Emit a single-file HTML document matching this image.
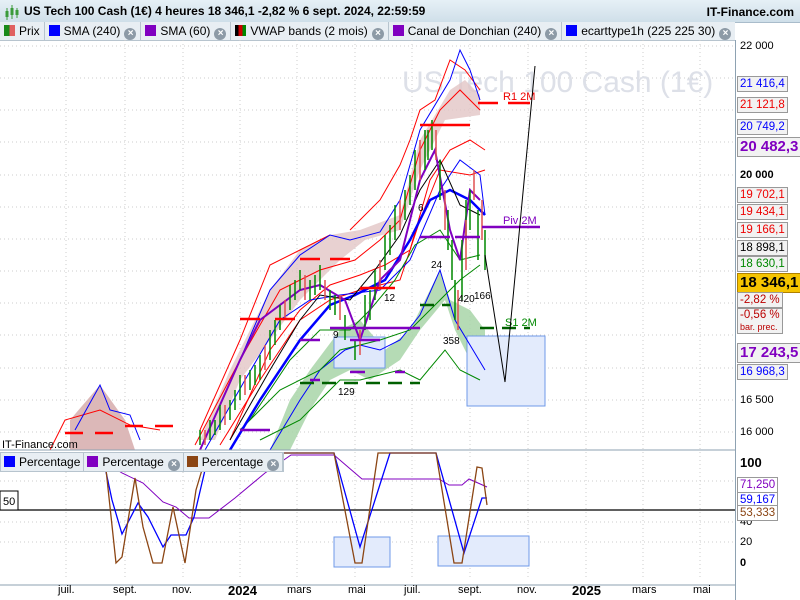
<!DOCTYPE html>
<html><head><meta charset="utf-8"><style>
body{margin:0;width:800px;height:600px;overflow:hidden;background:#fff;font-family:"Liberation Sans",sans-serif;position:relative}
.top{position:absolute;left:0;top:0;width:800px;height:22px;background:linear-gradient(#e6f0f6,#cfdfe9);border-bottom:1px solid #a9bccb}
.top .t{position:absolute;left:24px;top:4px;font-size:12px;font-weight:bold;color:#000}
.top .r{position:absolute;right:6px;top:5px;font-size:12px;font-weight:bold}
.leg{position:absolute;left:0;top:22px;height:18px;width:735px;background:#e8eef3;border-bottom:1px solid #b7c4ce;font-size:12px;white-space:nowrap;overflow:hidden}
.leg span{display:inline-block;height:18px;line-height:18px;padding:0 4px 0 4px;border-right:1px solid #b7c4ce}
.sq{display:inline-block;width:11px;height:11px;vertical-align:-1px;margin-right:4px}
.x{display:inline-block;width:12px;height:12px;border-radius:6px;background:#8d9aa6;color:#fff;font-size:10px;line-height:12px;text-align:center;vertical-align:-1px;margin-left:4px;font-weight:bold}
.ax{position:absolute;left:735px;top:40px;width:65px;height:560px;background:#fff;border-left:1px solid #8ea2b2}
.lab{position:absolute;left:737px;font-size:11.5px;background:#f2f2f2;border:1px solid #999;padding:0 2px;line-height:14px;white-space:nowrap}
.al{position:absolute;left:740px;font-size:11px;color:#000}
.bl{position:absolute;top:584px;font-size:11px;color:#000}
.leg2{position:absolute;left:0;top:452px;height:18px;background:#e8eef3;border:1px solid #b7c4ce;font-size:12px;white-space:nowrap}
.leg2 span{display:inline-block;height:18px;line-height:18px;padding:0 3px;border-right:1px solid #b7c4ce}
</style></head><body>
<div class="top"><svg width="20" height="20" style="position:absolute;left:3px;top:2px"><path d="M4 6v12M9 3v14M14 6v10" stroke="#3a9a3a" stroke-width="1"/><rect x="2.5" y="9" width="3" height="6" fill="#3a9a3a"/><rect x="7.5" y="6" width="3" height="7" fill="#3a9a3a"/><rect x="12.5" y="8" width="3" height="5" fill="#3a9a3a"/></svg><div class="t">US Tech 100 Cash (1€) 4 heures 18 346,1 -2,82 % 6 sept. 2024, 22:59:59</div><div class="r">IT-Finance.com</div></div>
<div class="leg"><span><i class="sq" style="background:linear-gradient(90deg,#1a8a1a 50%,#e06060 50%)"></i>Prix</span><span><i class="sq" style="background:#00f"></i>SMA (240)<i class="x">×</i></span><span><i class="sq" style="background:#8000c0"></i>SMA (60)<i class="x">×</i></span><span><i class="sq" style="background:linear-gradient(90deg,#000 33%,#c00 33%,#c00 66%,#080 66%)"></i>VWAP bands (2 mois)<i class="x">×</i></span><span><i class="sq" style="background:#8000c0"></i>Canal de Donchian (240)<i class="x">×</i></span><span><i class="sq" style="background:#00f"></i>ecarttype1h (225 225 30)<i class="x">×</i></span><span><i class="sq" style="background:linear-gradient(90deg,#c00 33%,#80c 33%,#80c 66%,#080 66%)"></i>Points pivots</span></div>
<svg width="735" height="560" style="position:absolute;left:0;top:40px" viewBox="0 40 735 560">
<g stroke="#ccc" stroke-dasharray="1,3">
<path d="M66 40V578M125 40V578M183 40V578M240 40V578M297 40V578M355 40V578M412 40V578M470 40V578M528 40V578M586 40V578M643 40V578M700 40V578"/>
<path d="M0 46H735M0 78H735M0 110H735M0 142H735M0 175H735M0 207H735M0 239H735M0 271H735M0 303H735M0 335H735M0 368H735M0 400H735M0 432H735"/>
<path d="M0 481H735M0 522H735M0 542H735"/>
</g>
<text x="402" y="92" font-size="30" fill="#dde0e8" font-family="Liberation Sans">US Tech 100 Cash (1€)</text>
<path d="M70 420L100 385L125 420L135 450L70 450Z" fill="#dcb8b8"/>
<path d="M200 440L230 370L270 290L300 250L330 235L360 230L400 215L420 140L450 90L465 80L480 95L480 115L445 120L420 170L400 230L365 240L340 260L300 300L270 340L240 380L215 440Z" fill="#e2c6c6" opacity=".8"/>
<path d="M270 450L290 400L310 370L340 330L360 320L385 350L410 330L440 270L450 300L470 310L485 330L485 380L470 360L455 330L445 300L420 330L400 360L370 380L350 370L330 380L310 410L290 450Z" fill="#a8d5a8" opacity=".85"/>
<rect x="334" y="337" width="51" height="31" fill="#dfe8fb" stroke="#6f9ae8"/>
<rect x="467" y="336" width="78" height="70" fill="#e3ebfc" stroke="#6f9ae8"/>
<path d="M50 450L65 420L100 410L130 425L160 430M200 430L240 340L270 265L300 250L330 235M350 230L380 200L400 165L410 140L420 110L435 100L450 60L465 70L480 90" fill="none" stroke="#f00"/>
<path d="M195 445L240 360L280 290L320 270L355 260L380 240L400 220L420 150L440 110L460 90L480 110" fill="none" stroke="#f00"/>
<path d="M220 445L260 380L300 320L330 300L360 290L400 280L420 220L440 170L470 175L485 170" fill="none" stroke="#f00"/>
<path d="M230 440L270 350L300 310L330 285L360 275L385 265L410 250L430 180L450 150L470 140L485 150" fill="none" stroke="#f00"/>
<path d="M75 430L100 385L110 410L130 415L140 440M200 450L240 360L270 290L300 255L330 235L350 240L380 232L400 200L420 130L450 80L460 50L470 70L480 100" fill="none" stroke="#00f"/>
<path d="M205 450L245 380L280 320L310 300L340 295L380 290L410 260L440 190L460 160L480 175L485 215" fill="none" stroke="#00f"/>
<path d="M270 450L300 400L320 370L345 350L360 345L380 350L400 340L420 315L440 270L455 320L470 345L485 370" fill="none" stroke="#00f"/>
<path d="M240 430L280 390L320 370L340 350L380 340L410 330L440 300L460 280L480 265" fill="none" stroke="#080"/>
<path d="M260 440L300 420L340 380L360 380L380 375L400 370L420 380L445 350L460 370L480 380" fill="none" stroke="#080"/>
<path d="M250 420L290 360L320 330L350 330L370 310L395 280L415 245L440 230L460 260L480 255" fill="none" stroke="#080"/>
<path d="M230 450L260 400L300 340L330 305L355 295L385 280L410 240L430 200L450 190L470 200L485 215" fill="none" stroke="#00f" stroke-width="2.5"/>
<path d="M230 440L270 370L300 320L320 295L350 300L375 270L400 235L420 190L440 160L460 205L480 215" fill="none" stroke="#000"/>
<path d="M200 450L240 360L260 320L300 290L320 285L345 300L360 340L380 280L400 260L420 180L435 150L450 230L460 260L470 190L480 200" fill="none" stroke="#8000c0" stroke-width="2"/>
<g stroke="#080" stroke-width="1.5">
<path d="M200 445v-15M210 440v-20M220 430v-25M230 420v-20M240 400v-25M250 390v-20M260 380v-25M270 360v-30M280 330v-25M290 310v-25M300 290v-20M310 300v-20M320 290v-25M330 310v-20M345 340v-25M355 360v-20M365 330v-35M375 300v-30M385 270v-35M395 240v-35M405 220v-30M415 190v-40M425 170v-40M432 150v-30M440 200v-40M448 250v-40M455 320v-40M462 300v-60M470 230v-40M478 260v-50M485 270v-40"/>
<path d="M215 435v-15M235 410v-20M255 385v-20M275 345v-25M295 300v-20M315 295v-20M335 315v-20M370 320v-30M390 255v-30M410 205v-30M428 160v-30M452 280v-40M466 240v-40"/>
</g>
<g stroke="#e05050" stroke-width="1.5">
<path d="M205 445v-15M225 425v-20M245 395v-20M265 370v-25M285 320v-20M305 300v-25M325 300v-20M340 320v-25M360 355v-25M380 290v-30M400 230v-30M420 180v-40M436 160v-30M445 230v-40M458 330v-40M466 270v-50M474 200v-30M482 240v-40"/>
</g>
<g stroke="#f00" stroke-width="2.5"><path d="M65 433h18M95 433h18M125 426h18M155 426h18M240 319h20M275 319h20M300 259h20M330 259h20M360 288h20M375 288h20M420 125h35M440 125h30M478 103h20M508 103h22"/></g>
<g stroke="#8000c0" stroke-width="2.5"><path d="M240 430h30M300 340h20M350 340h30M330 328h30M360 328h60M420 237h30M455 237h25M482 227h58M310 380h10M350 372h15M395 372h10"/></g>
<g stroke="#006000" stroke-width="2.5" stroke-dasharray="14,8"><path d="M300 383h120M420 305h30M480 328h50"/></g>
<text x="503" y="100" font-size="11" fill="#e00">R1 2M</text>
<text x="503" y="224" font-size="11" fill="#8000c0">Piv 2M</text>
<text x="505" y="326" font-size="11" fill="#080">S1 2M</text>
<g font-size="10" fill="#000"><text x="333" y="338">9</text><text x="338" y="395">129</text><text x="384" y="301">12</text><text x="431" y="268">24</text><text x="458" y="302">420</text><text x="474" y="299">166</text><text x="443" y="344">358</text><text x="418" y="211">6</text></g>
<path d="M485 255L505 382L535 66" fill="none" stroke="#000"/>
<path d="M0 450H735" stroke="#8ea2b2"/>
<path d="M0 510H735" stroke="#000" stroke-width="1.3"/>
<rect x="0" y="491" width="18" height="19" fill="#fff" stroke="#000"/>
<text x="3" y="505" font-size="11">50</text>
<rect x="334" y="537" width="56" height="30" fill="#e3ebfc" stroke="#6f9ae8"/>
<rect x="438" y="536" width="91" height="30" fill="#e3ebfc" stroke="#6f9ae8"/>
<path d="M102 460L122 473L143 483L163 502L176 507L189 518L209 518L235 498L265 473L291 455L334 455L362 479L439 479L449 485L462 485L469 479L487 487" fill="none" stroke="#8000c0"/>
<path d="M102 453L112 500L122 534L138 503L148 517L163 547L171 535L186 535L194 517L209 453L334 453L360 547L390 453L436 453L464 553L482 498L487 498" fill="none" stroke="#00f" stroke-width="1.3"/>
<path d="M105 460L116 563L122 557L135 478L143 527L153 563L162 563L173 507L185 563L196 490L207 453L334 453L355 563L362 563L378 453L436 453L454 563L462 563L477 467L482 468L487 505" fill="none" stroke="#8b4513" stroke-width="1.3"/>
<path d="M0 585H735" stroke="#8ea2b2"/>
</svg>
<div class="leg2"><span><i class="sq" style="background:#00f"></i>Percentage</span><span><i class="sq" style="background:#8000c0"></i>Percentage<i class="x">×</i></span><span><i class="sq" style="background:#8b4513"></i>Percentage<i class="x">×</i></span></div>
<div style="position:absolute;left:2px;top:439px;font-size:11px">IT-Finance.com</div>
<div class="ax"></div>
<div class="al" style="top:40px">22 000</div>
<div class="al" style="top:169px;font-weight:bold">20 000</div>
<div class="al" style="top:394px">16 500</div>
<div class="al" style="top:426px">16 000</div>
<div class="lab" style="top:76px;color:#00f">21 416,4</div>
<div class="lab" style="top:97px;color:#e00">21 121,8</div>
<div class="lab" style="top:119px;color:#00f">20 749,2</div>
<div class="lab" style="top:137px;color:#8000c0;font-weight:bold;font-size:15px;line-height:18px">20 482,3</div>
<div class="lab" style="top:187px;color:#e00">19 702,1</div>
<div class="lab" style="top:204px;color:#e00">19 434,1</div>
<div class="lab" style="top:222px;color:#e00">19 166,1</div>
<div class="lab" style="top:240px;color:#000">18 898,1</div>
<div class="lab" style="top:256px;color:#080">18 630,1</div>
<div class="lab" style="top:273px;background:#f5c400;border-color:#b08000;font-weight:bold;font-size:15px;line-height:18px;color:#000">18 346,1</div>
<div class="lab" style="top:292px;color:#b00">-2,82 %</div>
<div class="lab" style="top:308px;color:#b00;line-height:12px">-0,56 %<br><span style="font-size:9px">bar. prec.</span></div>
<div class="lab" style="top:343px;color:#8000c0;font-weight:bold;font-size:15px;line-height:18px">17 243,5</div>
<div class="lab" style="top:364px;color:#00f">16 968,3</div>
<div class="al" style="top:455px;font-weight:bold;font-size:13px">100</div>
<div class="al" style="top:516px">40</div>
<div class="al" style="top:536px">20</div>
<div class="al" style="top:557px;font-weight:bold">0</div>
<div class="lab" style="top:477px;color:#8000c0;background:#fff">71,250</div>
<div class="lab" style="top:492px;color:#00f;background:#fff">59,167</div>
<div class="lab" style="top:505px;color:#8b4513;background:#fff">53,333</div>
<div class="bl" style="left:58px">juil.</div><div class="bl" style="left:113px">sept.</div><div class="bl" style="left:172px">nov.</div><div class="bl" style="left:228px;font-weight:bold;font-size:13px;top:583px">2024</div><div class="bl" style="left:287px">mars</div><div class="bl" style="left:348px">mai</div><div class="bl" style="left:404px">juil.</div><div class="bl" style="left:458px">sept.</div><div class="bl" style="left:517px">nov.</div><div class="bl" style="left:572px;font-weight:bold;font-size:13px;top:583px">2025</div><div class="bl" style="left:632px">mars</div><div class="bl" style="left:693px">mai</div>
</body></html>
